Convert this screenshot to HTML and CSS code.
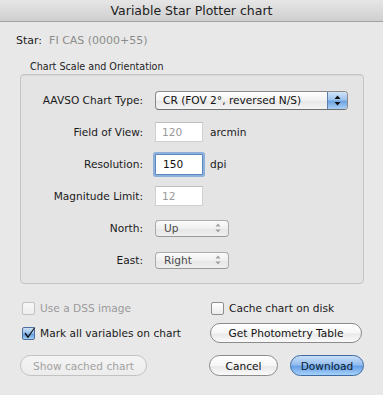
FILE: index.html
```html
<!DOCTYPE html>
<html>
<head>
<meta charset="utf-8">
<title>Variable Star Plotter chart</title>
<link rel="stylesheet" href="styles.css">
</head>
<body>
<div class="window">
  <div class="titlebar">Variable Star Plotter chart</div>
  <div class="content">
    <div class="star-row"><span class="star-label">Star:</span><span class="star-value">FI CAS (0000+55)</span></div>
    <div class="group-title">Chart Scale and Orientation</div>
    <div class="group">
      <div class="form-row">
        <span class="label">AAVSO Chart Type:</span>
        <div class="popup popup-large">
          <span class="popup-text">CR (FOV 2°, reversed N/S)</span>
          <span class="popup-cap">
            <svg width="7" height="11" viewBox="0 0 7 11"><path d="M3.5 0.5 L6.5 4 L0.5 4 Z M0.5 7 L6.5 7 L3.5 10.5 Z" fill="#111"/></svg>
          </span>
        </div>
      </div>
      <div class="form-row">
        <span class="label">Field of View:</span>
        <div class="field-wrap"><span class="field field-disabled">120</span><span class="unit">arcmin</span></div>
      </div>
      <div class="form-row">
        <span class="label">Resolution:</span>
        <div class="field-wrap"><span class="field field-focus">150</span><span class="unit">dpi</span></div>
      </div>
      <div class="form-row">
        <span class="label">Magnitude Limit:</span>
        <div class="field-wrap"><span class="field field-disabled">12</span></div>
      </div>
      <div class="form-row">
        <span class="label">North:</span>
        <div class="popup popup-small">
          <span class="popup-text">Up</span>
          <svg class="small-arrows" width="6" height="10" viewBox="0 0 6 10"><path d="M3 0.5 L5.5 3.5 L0.5 3.5 Z M0.5 6.5 L5.5 6.5 L3 9.5 Z" fill="#a0a0a0"/></svg>
        </div>
      </div>
      <div class="form-row">
        <span class="label">East:</span>
        <div class="popup popup-small">
          <span class="popup-text">Right</span>
          <svg class="small-arrows" width="6" height="10" viewBox="0 0 6 10"><path d="M3 0.5 L5.5 3.5 L0.5 3.5 Z M0.5 6.5 L5.5 6.5 L3 9.5 Z" fill="#a0a0a0"/></svg>
        </div>
      </div>
    </div>

    <div class="bottom">
      <div class="bottom-row row-1">
        <div class="cell">
          <span class="checkbox checkbox-disabled"></span><span class="check-label disabled-text">Use a DSS image</span>
        </div>
        <div class="cell">
          <span class="checkbox"></span><span class="check-label">Cache chart on disk</span>
        </div>
      </div>
      <div class="bottom-row row-2">
        <div class="cell">
          <span class="checkbox checkbox-checked">
            <svg width="13" height="13" viewBox="0 0 13 13"><path d="M2.5 6.5 L5 10 L11.5 1.2 L12.2 1.8 L5.2 12 L4.6 12 L1.5 7.4 Z" fill="#111"/></svg>
          </span><span class="check-label">Mark all variables on chart</span>
        </div>
        <div class="cell">
          <span class="button button-photometry">Get Photometry Table</span>
        </div>
      </div>
      <div class="bottom-row row-3">
        <div class="cell">
          <span class="button button-disabled">Show cached chart</span>
        </div>
        <div class="cell">
          <span class="button button-cancel">Cancel</span>
          <span class="button button-default">Download</span>
        </div>
      </div>
    </div>
  </div>
</div>
</body>
</html>
```
FILE: styles.css
```css
html, body {
  margin: 0;
  padding: 0;
}
body {
  width: 383px;
  height: 395px;
  overflow: hidden;
  background: #e8e8e8;
  font-family: "DejaVu Sans", "Open Sans", sans-serif;
  color: #1a1a1a;
}
.window {
  width: 383px;
  height: 395px;
  background: #e8e8e8;
}
.titlebar {
  height: 21px;
  line-height: 21px;
  text-align: center;
  font-size: 12.5px;
  color: #222;
  background: linear-gradient(#e6e6e6, #cfcfcf);
  border-bottom: 1px solid #a2a2a2;
}
.content {
  padding-left: 16px;
}
.star-row {
  margin-top: 11px;
  height: 16px;
  line-height: 16px;
  font-size: 11px;
  display: flex;
}
.star-label {
  color: #1e1e1e;
}
.star-value {
  margin-left: 7px;
  color: #8c8c8c;
}
.group-title {
  margin-top: 11px;
  margin-left: 14px;
  height: 14px;
  line-height: 14px;
  font-size: 9.6px;
  color: #1e1e1e;
}
.group {
  margin-left: 4px;
  width: 342px;
  height: 208px;
  border: 1px solid #c4c4c4;
  border-radius: 4px;
  background: #e4e4e4;
  box-shadow: inset 0 1px 0 #d8d8d8;
  padding-top: 9px;
  box-sizing: content-box;
}
.group {
  height: 199px;
}
.form-row {
  display: grid;
  grid-template-columns: 122px auto;
  column-gap: 12px;
  align-items: center;
  height: 32px;
  font-size: 10.6px;
}
.label {
  text-align: right;
  color: #1a1a1a;
}
.popup {
  display: flex;
  align-items: center;
  box-sizing: border-box;
  border-radius: 4px;
  position: relative;
}
.popup-large {
  width: 193px;
  height: 19px;
  border: 1px solid #8a8a8a;
  border-bottom-color: #6e6e6e;
  background: linear-gradient(#ffffff, #f1f1f1 50%, #e6e6e6 51%, #f4f4f4);
  overflow: hidden;
}
.popup-text {
  padding-left: 7px;
  flex: 1;
  color: #111;
}
.popup-cap {
  width: 19px;
  height: 100%;
  display: flex;
  align-items: center;
  justify-content: center;
  border-left: 1px solid #5d7fae;
  background: linear-gradient(#d2e4f8, #9ec4ee 45%, #6fa3e2 55%, #a9d0f5);
}
.popup-small {
  width: 74px;
  height: 17px;
  border: 1px solid #ababab;
  border-bottom-color: #999;
  background: linear-gradient(#fbfbfb, #f0f0f0 50%, #e6e6e6 51%, #efefef);
}
.popup-small .popup-text {
  padding-left: 8px;
  color: #4a4a4a;
}
.small-arrows {
  margin-right: 7px;
}
.field-wrap {
  display: flex;
  align-items: center;
}
.field {
  box-sizing: border-box;
  width: 48px;
  height: 20px;
  line-height: 19px;
  padding-left: 6px;
  background: #fff;
  font-size: 10.6px;
}
.field-disabled {
  border: 1px solid #d0d0d0;
  border-top-color: #c0c0c0;
  color: #9a9a9a;
}
.field-focus {
  height: 21px;
  border: 1px solid #5e87bd;
  box-shadow: 0 0 0 2px #8cb0dc;
  border-radius: 1px;
  color: #111;
  padding-left: 7px;
}
.unit {
  margin-left: 7px;
  color: #1a1a1a;
}
.bottom {
  margin-top: 14px;
  margin-left: 4px;
  font-size: 10.6px;
}
.bottom-row {
  display: grid;
  grid-template-columns: 189px auto;
  align-items: center;
}
.row-1 { height: 20px; }
.row-2 { height: 20px; margin-top: 5px; }
.row-3 { height: 21px; margin-top: 12px; }
.cell {
  display: flex;
  align-items: center;
}
.checkbox {
  box-sizing: border-box;
  width: 13px;
  height: 13px;
  margin-left: 2px;
  border: 1px solid #8e8e8e;
  border-radius: 2px;
  background: linear-gradient(#ffffff, #ececec);
  position: relative;
}
.checkbox-disabled {
  border-color: #c2c2c2;
  background: linear-gradient(#f7f7f7, #eeeeee);
}
.checkbox-checked {
  border-color: #4b6f9e;
  background: linear-gradient(#cfe2f7, #8fbaea 50%, #5f98dc 55%, #a7d0f6);
}
.checkbox-checked svg {
  position: absolute;
  left: 0px;
  top: -2px;
}
.check-label {
  margin-left: 5px;
  color: #1a1a1a;
}
.disabled-text {
  color: #9a9a9a;
}
.button {
  box-sizing: border-box;
  height: 21px;
  border-radius: 11px;
  border: 1px solid #8b8b8b;
  background: linear-gradient(#ffffff, #f6f6f6 50%, #e9e9e9 55%, #fafafa);
  display: flex;
  align-items: center;
  justify-content: center;
  color: #111;
}
.button-photometry {
  width: 152px;
  height: 20px;
  margin-left: 1px;
}
.button-disabled {
  width: 127px;
  border-color: #c2c2c2;
  color: #a2a2a2;
  background: linear-gradient(#f4f4f4, #ececec);
}
.button-cancel {
  width: 69px;
}
.button-default {
  width: 74px;
  margin-left: 12px;
  border-color: #3e6aa3;
  background: linear-gradient(#c9def6, #94bef0 45%, #66a0e6 55%, #a6d2fa);
  color: #0d1a2a;
}
```
